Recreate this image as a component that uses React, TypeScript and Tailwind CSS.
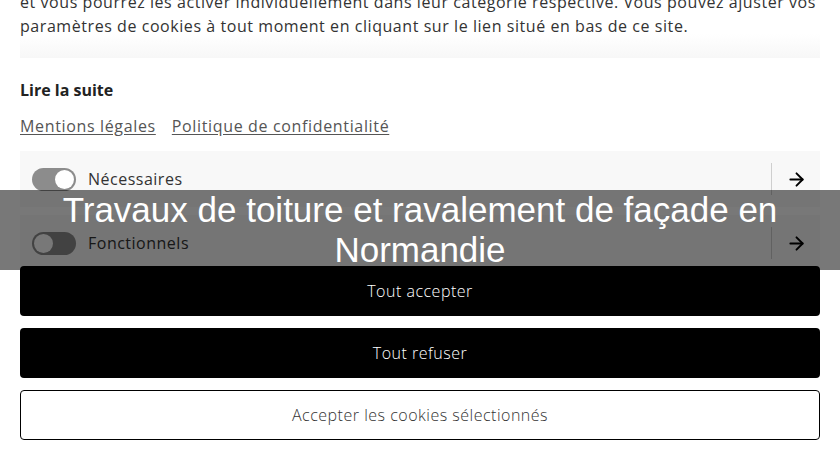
import { ArrowRight } from "lucide-react";

const FONT = "font-['Open_Sans','Noto_Sans',sans-serif]";

function Toggle({ on }: { on: boolean }) {
  return (
    <span
      className={`flex h-[23px] w-[44px] shrink-0 items-center rounded-full bg-[#8c8c8c] px-[2px] ${
        on ? "justify-end" : "justify-start"
      }`}
    >
      <span className="h-[19px] w-[19px] rounded-full bg-white" />
    </span>
  );
}

function CategoryRow({ label, on }: { label: string; on: boolean }) {
  return (
    <div className="flex h-[56px] shrink-0 items-center bg-[#f8f8f8] pl-3">
      <Toggle on={on} />
      <span className="ml-3 flex-1 text-[16px] tracking-[0.5px] text-[#333]">{label}</span>
      <span className="h-[32px] w-px bg-[#cfcfcf]" />
      <span className="flex w-[48px] justify-center">
        <ArrowRight size={21} strokeWidth={2.2} className="text-black" />
      </span>
    </div>
  );
}

export default function App() {
  return (
    <div className={`relative h-[460px] w-[840px] overflow-hidden bg-white px-5 ${FONT}`}>
      <p className="-mt-[10px] whitespace-nowrap text-[16px] leading-[24px] tracking-[0.56px] text-[#333]">
        et vous pourrez les activer individuellement dans leur catégorie respective. Vous pouvez ajuster vos
        <br />
        paramètres de cookies à tout moment en cliquant sur le lien situé en bas de ce site.
      </p>
      <div className="-mt-1 h-6 bg-gradient-to-b from-white to-[#f7f7f7]" />

      <h3 className="mt-5 text-[16px] font-bold leading-[24px] text-[#222]">Lire la suite</h3>

      <div className="mt-3 flex gap-4 text-[16px] leading-[24px] tracking-[0.65px] text-[#555]">
        <a className="underline underline-offset-2">Mentions légales</a>
        <a className="underline underline-offset-2">Politique de confidentialité</a>
      </div>

      <div className="mt-[13px] flex h-[115px] flex-col gap-2 overflow-hidden">
        <CategoryRow label="Nécessaires" on />
        <CategoryRow label="Fonctionnels" on={false} />
      </div>

      <div className="flex flex-col gap-3 text-[16px] font-light tracking-[0.5px]">
        <button className="h-[50px] rounded bg-black text-white">Tout accepter</button>
        <button className="h-[50px] rounded bg-black text-white">Tout refuser</button>
        <button className="h-[50px] rounded border border-black bg-white text-[#333]">
          Accepter les cookies sélectionnés
        </button>
      </div>

      <div className="absolute left-0 top-[190px] flex h-[80px] w-full items-center justify-center bg-black/[0.53] px-10 text-center font-['Liberation_Sans',Arial,sans-serif] text-[35px] leading-[40px] text-white">
        Travaux de toiture et ravalement de façade en Normandie
      </div>
    </div>
  );
}
